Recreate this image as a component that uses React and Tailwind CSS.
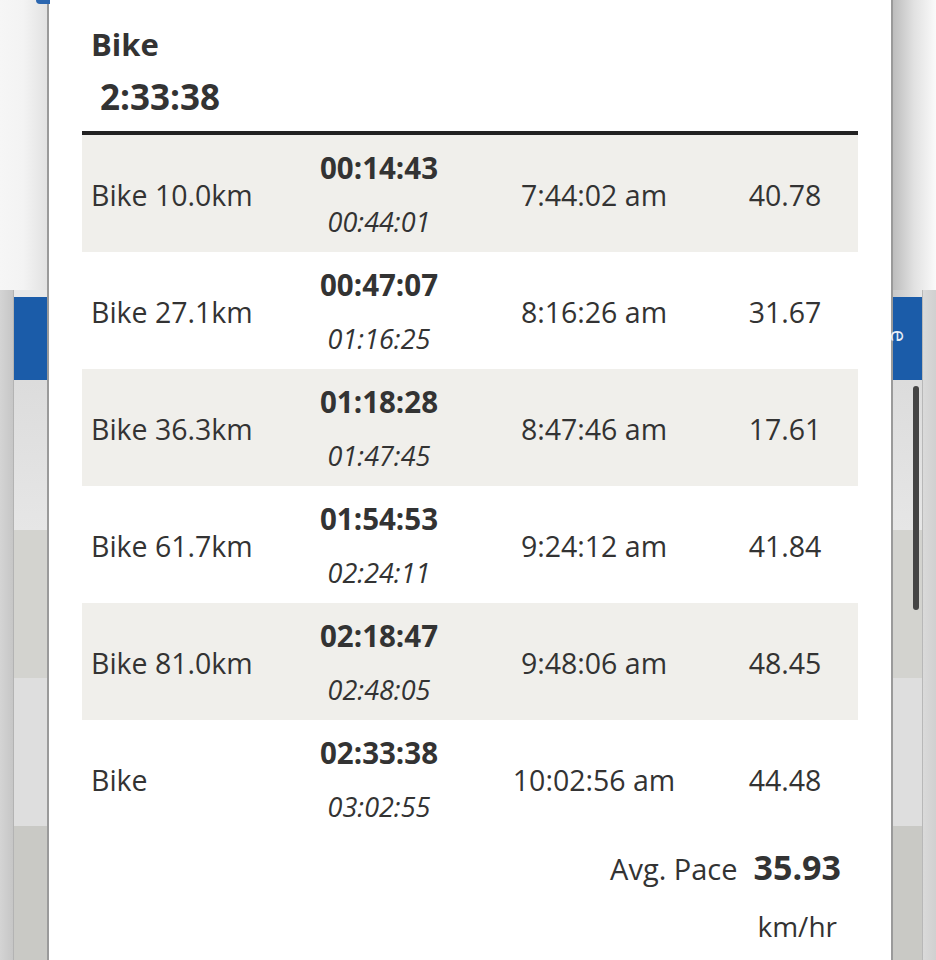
import React from "react";

const rows = [
  { name: "Bike 10.0km", split: "00:14:43", total: "00:44:01", clock: "7:44:02 am", speed: "40.78" },
  { name: "Bike 27.1km", split: "00:47:07", total: "01:16:25", clock: "8:16:26 am", speed: "31.67" },
  { name: "Bike 36.3km", split: "01:18:28", total: "01:47:45", clock: "8:47:46 am", speed: "17.61" },
  { name: "Bike 61.7km", split: "01:54:53", total: "02:24:11", clock: "9:24:12 am", speed: "41.84" },
  { name: "Bike 81.0km", split: "02:18:47", total: "02:48:05", clock: "9:48:06 am", speed: "48.45" },
  { name: "Bike", split: "02:33:38", total: "03:02:55", clock: "10:02:56 am", speed: "44.48" },
];

function Bands() {
  return (
    <div className="flex flex-1 flex-col">
      <div className="h-[150px] bg-gradient-to-b from-[#dcdcdc] to-[#e6e6e6]" />
      <div className="h-[148px] bg-[#d3d3cf]" />
      <div className="h-[148px] bg-[#dedede]" />
      <div className="flex-1 bg-[#c9c9c5]" />
    </div>
  );
}

export default function App() {
  return (
    <div
      className="relative flex h-[960px] w-[936px] overflow-hidden bg-white text-[#333]"
      style={{ fontFamily: '"Open Sans", "Noto Sans", sans-serif' }}
    >
      {/* left background strip */}
      <div className="relative flex w-[47px] flex-col">
        <div className="absolute left-[36px] top-0 h-[4px] w-[14px] rounded-bl-[6px] bg-[#2b66b0]" />
        <div className="h-[290px] bg-gradient-to-r from-[#f6f6f6] via-[#f3f3f3] to-[#e2e2e2]" />
        <div className="flex flex-1">
          <div className="w-[13px] bg-gradient-to-r from-[#d4d4d4] to-[#c6c6c6]" />
          <div className="w-px bg-[#b3b3b3]" />
          <div className="flex flex-1 flex-col bg-[#e6e6e6]">
            <div className="h-[7px] bg-[#e9e9e9]" />
            <div className="h-[83px] bg-[#1b5ca9]" />
            <Bands />
          </div>
        </div>
      </div>

      {/* modal */}
      <div className="flex w-[846px] flex-col border-x-2 border-[#9a9a9a] bg-white px-[33px]">
        <div className="pl-[9px] pt-[24px]">
          <div className="text-[31px] font-bold leading-[40px]">Bike</div>
          <div className="mt-[12px] pl-[9px] text-[35px] font-bold leading-[42px]">2:33:38</div>
        </div>
        <div className="mt-[13px] h-[4px] bg-[#222]" />
        <div className="flex flex-col">
          {rows.map((r, i) => (
            <div
              key={i}
              className={`flex h-[117px] items-center pt-[2px] ${i % 2 === 0 ? "bg-[#f0efeb]" : "bg-white"}`}
            >
              <div className="w-[217px] pl-[9px] text-[28.5px] leading-[34px]">{r.name}</div>
              <div className="flex w-[160px] flex-col items-center gap-[20px]">
                <div className="text-[29.5px] font-bold leading-[34px]">{r.split}</div>
                <div className="text-[27px] italic leading-[34px]">{r.total}</div>
              </div>
              <div className="w-[270px] text-center text-[28.5px] leading-[34px]">{r.clock}</div>
              <div className="w-[112px] text-center text-[28.5px] leading-[34px]">{r.speed}</div>
            </div>
          ))}
        </div>
        <div className="mt-[10px] flex flex-col items-end pr-[17px]">
          <div className="flex items-baseline gap-[16px] leading-[40px]">
            <span className="text-[29px]">Avg. Pace</span>
            <span className="text-[34px] font-bold">35.93</span>
          </div>
          <div className="mt-[19px] pr-[4px] text-[28px] leading-[36px]">km/hr</div>
        </div>
      </div>

      {/* right background strip */}
      <div className="relative flex flex-1 flex-col">
        <div className="h-[290px] bg-gradient-to-r from-[#bdbdbd] via-[#e2e2e2] to-[#fafafa]" />
        <div className="flex flex-1">
          <div className="flex w-[29px] flex-col bg-[#d6d6d6]">
            <div className="h-[7px] bg-gradient-to-r from-[#c8c8c8] to-[#e8e8e8]" />
            <div className="relative h-[83px] bg-[#1b5ca9]">
              <span className="absolute left-[1px] top-[28px] rotate-90 text-[22px] leading-none text-white/90">
                e
              </span>
            </div>
            <Bands />
          </div>
          <div className="w-px bg-[#b8b8b8]" />
          <div className="flex-1 bg-gradient-to-r from-[#dadada] to-[#d0d0d0]" />
        </div>
        <div className="absolute left-[20px] top-[386px] h-[224px] w-[6px] rounded-full bg-[#444]" />
      </div>
    </div>
  );
}
